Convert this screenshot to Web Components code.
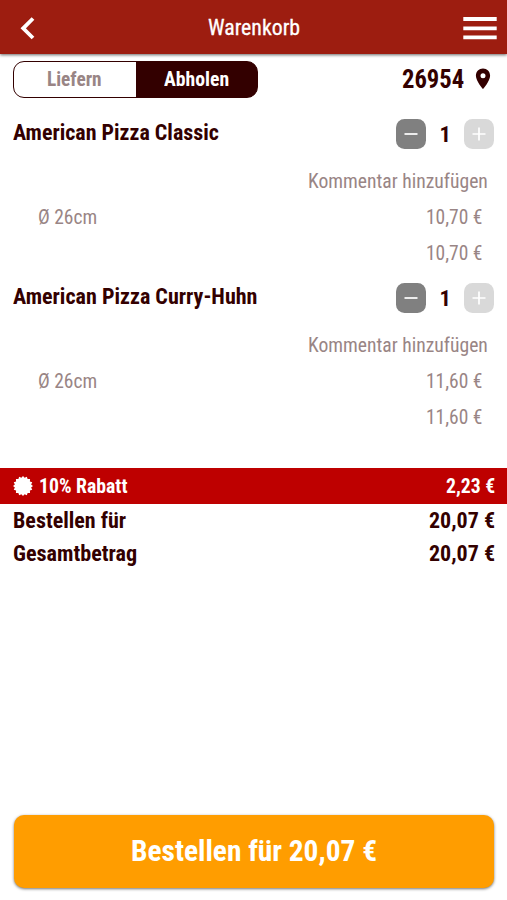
<!DOCTYPE html>
<html lang="de">
<head>
<meta charset="utf-8">
<meta name="viewport" content="width=device-width, initial-scale=1">
<title>Warenkorb</title>
<style>
  html, body {
    margin: 0;
    height: 100%;
  }

  body {
    background: #fff;
    color: #300;
    font-family: "Roboto Condensed", Roboto, "Liberation Sans", sans-serif;
    font-stretch: 75%;
    overflow: hidden;
  }
</style>
</head>
<body>
<cart-page>
  <cart-header slot="header"><fit-text width="92">Warenkorb</fit-text></cart-header>
  <cart-toolbar slot="toolbar">
    <fit-text slot="deliver" width="55">Liefern</fit-text>
    <fit-text slot="pickup" width="65">Abholen</fit-text>
    <fit-text slot="zip" width="62">26954</fit-text>
  </cart-toolbar>
  <cart-item>
    <fit-text slot="name" width="206">American Pizza Classic</fit-text>
    <fit-text slot="count" width="11">1</fit-text>
    <fit-text slot="comment" width="179.5">Kommentar hinzufügen</fit-text>
    <fit-text slot="size" width="59.5">Ø 26cm</fit-text>
    <fit-text slot="price" width="56.5">10,70 €</fit-text>
    <fit-text slot="total" width="56.5">10,70 €</fit-text>
  </cart-item>
  <cart-item>
    <fit-text slot="name" width="244">American Pizza Curry-Huhn</fit-text>
    <fit-text slot="count" width="11">1</fit-text>
    <fit-text slot="comment" width="179.5">Kommentar hinzufügen</fit-text>
    <fit-text slot="size" width="59.5">Ø 26cm</fit-text>
    <fit-text slot="price" width="56.5">11,60 €</fit-text>
    <fit-text slot="total" width="56.5">11,60 €</fit-text>
  </cart-item>
  <cart-summary slot="summary">
    <fit-text slot="discount-label" width="88">10% Rabatt</fit-text>
    <fit-text slot="discount" width="49.5">2,23 €</fit-text>
    <fit-text slot="order-label" width="113.5">Bestellen für</fit-text>
    <fit-text slot="order" width="66.5">20,07 €</fit-text>
    <fit-text slot="total-label" width="124">Gesamtbetrag</fit-text>
    <fit-text slot="total" width="66.5">20,07 €</fit-text>
  </cart-summary>
  <order-button slot="action"><fit-text width="246">Bestellen für 20,07 €</fit-text></order-button>
</cart-page>

<script>
const define = (tag, css, markup, Base = HTMLElement) => {
  const template = document.createElement("template");
  template.innerHTML = `<style>${css}</style>${markup}`;

  class Component extends Base {
    constructor() {
      super();
      this.dom = this.attachShadow({ mode: "open" });
      this.dom.appendChild(template.content.cloneNode(true));
    }
  }

  if (window.customElements.get(tag) === undefined) {
    window.customElements.define(tag, Component);
  }
};

define("cart-page", `
  :host {
    display: flex;
    flex-direction: column;
    height: 100vh;
  }
  .items {
    display: flex;
    flex-direction: column;
    padding-top: 21.5px;
    margin-bottom: 20.5px;
  }
  .spacer {
    flex: 1;
  }
`, `
  <slot name="header"></slot>
  <slot name="toolbar"></slot>
  <div class="items"><slot></slot></div>
  <slot name="summary"></slot>
  <div class="spacer"></div>
  <slot name="action"></slot>
`);

define("cart-header", `
  :host {
    display: grid;
    grid-template-columns: 1fr auto 1fr;
    align-items: center;
    box-sizing: border-box;
    height: 54px;
    padding: 1px 10px 0 20px;
    background: #9d1d10;
    box-shadow: 0 1px 3px rgba(0, 0, 0, 0.6);
    color: #fff;
    font-size: 22.5px;
    line-height: 30px;
  }
  svg {
    display: block;
  }
  .title {
    padding-bottom: 1px;
    margin-left: -10px;
    -webkit-text-stroke: 0.3px;
  }
  .menu {
    justify-self: end;
  }
`, `
  <svg class="back" width="15" height="24" viewBox="0 0 15 24">
    <path d="M13 2.5 3.2 12.3 13 22" fill="none" stroke="#fff" stroke-width="3.8"/>
  </svg>
  <div class="title"><slot></slot></div>
  <svg class="menu" width="34" height="24" viewBox="0 0 34 24">
    <path d="M.3 3h33.4M.3 12.3h33.4M.3 21.3h33.4" stroke="#fff" stroke-width="3.8"/>
  </svg>
`);

define("cart-toolbar", `
  :host {
    display: flex;
    justify-content: space-between;
    align-items: center;
    height: 36.5px;
    padding: 7px 16px 0 13px;
    font-weight: 700;
  }
  .switch {
    display: flex;
    box-sizing: border-box;
    width: 245px;
    height: 36.5px;
    border: 1px solid #300;
    border-radius: 11px;
    background: linear-gradient(90deg, #fff 50%, #300 50%);
    font-size: 20px;
  }
  .switch div {
    flex: 1;
    display: flex;
    align-items: center;
    justify-content: center;
  }
  .off {
    color: #998585;
  }
  .on {
    color: #fff;
  }
  .zip {
    display: flex;
    align-items: center;
    gap: 11px;
    font-size: 25px;
  }
  .number {
    padding-top: 1px;
  }
  svg {
    display: block;
    margin-bottom: 1px;
  }
`, `
  <div class="switch">
    <div class="off"><slot name="deliver"></slot></div>
    <div class="on"><slot name="pickup"></slot></div>
  </div>
  <div class="zip">
    <div class="number"><slot name="zip"></slot></div>
    <svg width="16" height="22" viewBox="0 0 16 22">
      <path fill="#300" fill-rule="evenodd" d="M8 .6C4 .6.9 3.7.9 7.7.9 13 8 21 8 21s7.1-8 7.1-13.3C15.1 3.7 12 .6 8 .6zm0 4.6a2.5 2.5 0 1 1 0 5 2.5 2.5 0 0 1 0-5z"/>
    </svg>
  </div>
`);

define("cart-item", `
  :host {
    display: flex;
    flex-direction: column;
    height: 164px;
    font-size: 20px;
    color: #998585;
  }
  .head {
    display: flex;
    justify-content: space-between;
    align-items: center;
    height: 30px;
    padding: 0 13px;
    margin-bottom: 14px;
    color: #300;
    font-size: 22.5px;
    font-weight: 700;
  }
  .name {
    padding-bottom: 5px;
  }
  .stepper {
    display: grid;
    grid-template-columns: 30px 38px 30px;
    align-items: center;
    justify-items: center;
  }
  svg {
    display: block;
  }
  .row {
    display: flex;
    justify-content: space-between;
    align-items: center;
    height: 36px;
    padding: 0 25px 0 37.5px;
  }
  .comment {
    justify-content: flex-end;
    padding-right: 19.5px;
  }
  .total {
    justify-content: flex-end;
    height: 35px;
  }
`, `
  <div class="head">
    <div class="name"><slot name="name"></slot></div>
    <div class="stepper">
      <svg width="30" height="30" viewBox="0 0 30 30">
        <rect width="30" height="30" rx="8.5" fill="#808080"/>
        <path d="M8.5 15h13" stroke="#fff" stroke-width="1.7"/>
      </svg>
      <slot name="count"></slot>
      <svg width="30" height="30" viewBox="0 0 30 30">
        <rect width="30" height="30" rx="8.5" fill="#d9d9d9"/>
        <path d="M8.5 15h13M15 8.5v13" stroke="#fff" stroke-width="1.7"/>
      </svg>
    </div>
  </div>
  <div class="row comment"><slot name="comment"></slot></div>
  <div class="row"><slot name="size"></slot><slot name="price"></slot></div>
  <div class="row total"><slot name="total"></slot></div>
`);

// seal outline: alternate between the outer and inner radius
const seal = Array.from({ length: 32 }, (_, i) => {
  const r = i % 2 ? 8.3 : 10;
  const a = (i * Math.PI) / 16;
  return `${(10 + r * Math.sin(a)).toFixed(2)},${(10 - r * Math.cos(a)).toFixed(2)}`;
}).join(" ");

define("cart-summary", `
  :host {
    display: flex;
    flex-direction: column;
    font-size: 22.5px;
    font-weight: 700;
  }
  .row {
    display: flex;
    justify-content: space-between;
    align-items: center;
    box-sizing: border-box;
    height: 33px;
    padding: 0 12px 1px 13px;
  }
  .discount {
    height: 36.5px;
    padding-bottom: 0;
    padding-top: 1.5px;
    background: #be0000;
    color: #fff;
    font-size: 19.5px;
  }
  .label {
    display: flex;
    align-items: center;
    gap: 6px;
  }
  svg {
    display: block;
    margin-bottom: 1.5px;
  }
`, `
  <div class="row discount">
    <div class="label">
      <svg width="20" height="20" viewBox="0 0 20 20"><polygon points="${seal}" fill="#fff"/></svg>
      <slot name="discount-label"></slot>
    </div>
    <slot name="discount"></slot>
  </div>
  <div class="row"><slot name="order-label"></slot><slot name="order"></slot></div>
  <div class="row"><slot name="total-label"></slot><slot name="total"></slot></div>
`);

define("order-button", `
  :host {
    display: flex;
    align-items: center;
    justify-content: center;
    height: 73px;
    margin: 0 13px 12.5px 13.5px;
    border-radius: 10px;
    background: #ff9d00;
    box-shadow: 0 1px 3px rgba(0, 0, 0, 0.55);
    color: #fff;
    font-size: 30px;
    font-weight: 700;
  }
`, `<slot></slot>`);

class FitBase extends HTMLElement {
  connectedCallback() {
    const inner = this.dom.querySelector("span");
    const width = parseFloat(this.getAttribute("width"));
    this.style.width = `${width}px`;
    inner.style.transform = `scaleX(${width / inner.offsetWidth})`;
  }
}

define("fit-text", `
  :host {
    display: block;
    line-height: 30px;
    white-space: nowrap;
  }
  span {
    display: inline-block;
    vertical-align: top;
    transform-origin: 0 0;
  }
`, `<span><slot></slot></span>`, FitBase);
</script>
</body>
</html>
